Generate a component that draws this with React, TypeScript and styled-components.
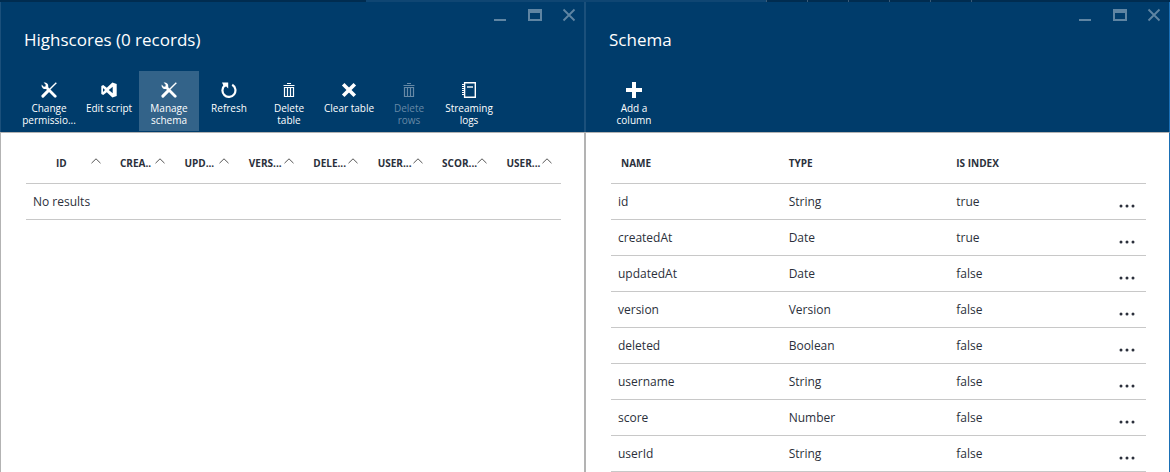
import React from "react";
import styled, { createGlobalStyle, css } from "styled-components";

const navy = "#003c6b";
const rule = "#c8c8c8";
const edge = "#b3b3b3";

const GlobalStyle = createGlobalStyle`
  *, *::before, *::after { box-sizing: border-box; }
  body {
    margin: 0;
    background: #fff;
    color: #2b303b;
    font-family: "Segoe UI", "Open Sans", "Noto Sans", sans-serif;
    font-size: 12px;
    line-height: 16px;
  }
  button { font: inherit; color: inherit; background: none; border: 0; padding: 0; cursor: pointer; }
`;

const Page = styled.div`
  min-height: 100vh;
  display: flex;
  flex-direction: column;
`;

const TopBar = styled.div`
  display: flex;
  height: 2px;
  background: #002c50;
`;

const TopSpacer = styled.div`
  width: 366px;
`;

const SearchEdge = styled.div`
  width: 400px;
  background: #0f4673;
`;

const TopSlot = styled.div`
  width: 41px;
  border-left: 1px solid #3a5b78;
`;

const Blades = styled.main`
  flex: 1;
  display: grid;
  grid-template-columns: 1fr 1fr;
`;

const Blade = styled.section`
  display: flex;
  flex-direction: column;
  min-width: 0;
`;

const BladeHeader = styled.header<{ $active?: boolean }>`
  display: flex;
  flex-direction: column;
  height: 130px;
  background: ${navy};
  border: solid #1b507b;
  border-width: 0 1px;
  ${(p) => p.$active && css`border-right-color: #1a6fb5;`}
`;

const WindowControls = styled.div`
  display: flex;
  justify-content: flex-end;
  align-items: center;
  gap: 20px;
  height: 26px;
  padding-right: 8px;
  color: #5f85a3;
`;

const ControlButton = styled.button`
  display: block;
  width: 14px;
  height: 14px;
  svg { display: block; }
`;

const Title = styled.h1`
  margin: 0;
  padding: 0 23px;
  font-size: 17px;
  line-height: 24px;
  font-weight: 400;
  color: #fff;
`;

const Toolbar = styled.div`
  display: flex;
  margin-top: auto;
  padding: 0 18px 1px;
`;

const Command = styled.button<{ $selected?: boolean }>`
  display: flex;
  flex-direction: column;
  align-items: center;
  gap: 4px;
  width: 60px;
  height: 60px;
  padding: 11px 0 0;
  color: #fff;
  font-size: 10px;
  font-weight: 500;
  line-height: 12px;
  text-align: center;
  background: ${(p) => (p.$selected ? "#336389" : "transparent")};
  &:disabled { color: #6689a6; cursor: default; }
  svg { display: block; flex: none; }
`;

const CommandLabel = styled.span`
  max-width: 60px;
  white-space: pre-line;
`;

const BladeBody = styled.div<{ $active?: boolean }>`
  flex: 1;
  padding: 0 23px 0 25px;
  border: solid ${edge};
  border-width: 1px 1px 0;
  ${(p) => p.$active && css`border-right-color: #1a6fb5;`}
`;

const Table = styled.table`
  width: 100%;
  table-layout: fixed;
  border-collapse: separate;
  border-spacing: 0;
`;

const HeadCell = styled.th<{ $first?: boolean }>`
  height: 51px;
  padding: 9px 0 0 ${(p) => (p.$first ? "30px" : "10px")};
  border-bottom: 1px solid ${rule};
  font-size: 10px;
  font-weight: 700;
  text-align: left;
  white-space: nowrap;
`;

const SchemaHead = styled(HeadCell)`
  padding-left: 10px;
`;

const Cell = styled.td<{ $inset?: number }>`
  height: 36px;
  padding: 1px 0 0 ${(p) => p.$inset ?? 10}px;
  border-bottom: 1px solid ${rule};
`;

const SortButton = styled.button`
  display: flex;
  font-weight: 700;
  svg { display: block; flex: none; margin-top: 3px; color: #555; }
`;

const SortLabel = styled.span`
  width: 35px;
  text-align: left;
`;

const FirstCol = styled.col`
  width: 84px;
`;

const MenuCol = styled.col`
  width: 32px;
`;

const MoreButton = styled.button`
  display: block;
  width: 20px;
  height: 16px;
  svg { display: block; margin: 8px auto 0; }
`;

const ToolsIcon = () => (
  <svg width="16" height="16" viewBox="0 0 16 16" fill="none" stroke="currentColor">
    <path d="M6 6 14.2 14.2" strokeWidth="2.8" strokeLinecap="round" />
    <path d="M2.6.6 4.8 2.8 4.4 4.4 2.8 4.8.6 2.6A3.8 3.8 0 0 0 1.8 6.2c1.2 1 2.6 1 3.6.6L7.2 5C7.4 3.600 7.200 2.400 6.200 1.500A3.800 3.800 0 0 0 2.600.6z" fill="currentColor" stroke="none" />
    <path d="M15.300.7 8 8" strokeWidth="1.4" />
    <path d="M6.600 9.400 1.900 14.100" strokeWidth="3" strokeLinecap="round" />
  </svg>
);

const ScriptIcon = () => (
  <svg width="16" height="16" viewBox="0 0 16 16" fill="currentColor" fillRule="evenodd">
    <path d="M11.4.5 15.7 2v12l-4.3 1.5-5.600-5.200-3.600 2.800L.3 12V4l1.900-1.100 3.600 2.800zM11.700 4.800 7.800 8l3.900 3.200zM2 5.900v4.200L4 8z" />
  </svg>
);

const RefreshIcon = () => (
  <svg width="16" height="16" viewBox="0 0 16 16" fill="none" stroke="currentColor">
    <path d="M11.200 2.800A6.500 6.500 0 1 1 3.800 3.400" strokeWidth="2.200" />
    <path d="M1 .4h6.200v6.200L5.200 4.600 3 5z" fill="currentColor" stroke="none" />
  </svg>
);

const TrashIcon = () => (
  <svg width="16" height="16" viewBox="0 0 16 16" fill="none" stroke="currentColor">
    <path d="M2.500 3.500h11M6 1.500h4" />
    <path d="M3.500 5v9.500h9V5M6.500 5v9M9.500 5v9M3.500 5.500h9" strokeWidth="1.200" />
  </svg>
);

const ClearIcon = () => (
  <svg width="16" height="16" viewBox="0 0 16 16" stroke="currentColor">
    <path d="m2.200 2.200 11.600 11.600M13.800 2.200 2.200 13.800" strokeWidth="3.600" />
  </svg>
);

const LogIcon = () => (
  <svg width="16" height="16" viewBox="0 0 16 16" fill="none" stroke="currentColor">
    <path d="M3.600.7h10.700v14.600H3.600z" strokeWidth="1.400" />
    <path d="M6 5h6" strokeWidth="1.400" />
    <path d="M1 2.500h3M1 4.500h3M1 6.500h3M1 8.500h3M1 10.500h3M1 12.500h3" />
  </svg>
);

const PlusIcon = () => (
  <svg width="16" height="16" viewBox="0 0 16 16" fill="currentColor">
    <path d="M6 0h4v6h6v4h-6v6H6v-6H0V6h6z" />
  </svg>
);

const CaretIcon = () => (
  <svg width="10" height="6" viewBox="0 0 10 6" fill="none" stroke="currentColor">
    <path d="M.5 5.2 5 .8l4.5 4.4" />
  </svg>
);

const Controls = () => (
  <WindowControls>
    <ControlButton aria-label="Minimize">
      <svg width="14" height="14" fill="currentColor"><path d="M0 11h12v2H0z" /></svg>
    </ControlButton>
    <ControlButton aria-label="Maximize">
      <svg width="14" height="14" fill="currentColor" fillRule="evenodd"><path d="M0 1h14v12H0zM2 5v6h10V5z" /></svg>
    </ControlButton>
    <ControlButton aria-label="Close">
      <svg width="14" height="14" fill="none" stroke="currentColor" strokeWidth="1.8"><path d="m1.5 1.5 11 11M12.5 1.5l-11 11" /></svg>
    </ControlButton>
  </WindowControls>
);

const commands = [
  { label: "Change\npermissio...", icon: ToolsIcon },
  { label: "Edit script", icon: ScriptIcon },
  { label: "Manage\nschema", icon: ToolsIcon, selected: true },
  { label: "Refresh", icon: RefreshIcon },
  { label: "Delete\ntable", icon: TrashIcon },
  { label: "Clear table", icon: ClearIcon },
  { label: "Delete\nrows", icon: TrashIcon, disabled: true },
  { label: "Streaming\nlogs", icon: LogIcon },
];

const recordColumns = ["ID", "CREA..", "UPD...", "VERS...", "DELE...", "USER...", "SCOR...", "USER..."];

const schema = [
  ["id", "String", "true"],
  ["createdAt", "Date", "true"],
  ["updatedAt", "Date", "false"],
  ["version", "Version", "false"],
  ["deleted", "Boolean", "false"],
  ["username", "String", "false"],
  ["score", "Number", "false"],
  ["userId", "String", "false"],
];

export default function App() {
  return (
    <Page>
      <GlobalStyle />
      <TopBar>
        <TopSpacer />
        <SearchEdge />
        {[0, 1, 2, 3, 4, 5].map((slot) => <TopSlot key={slot} />)}
      </TopBar>
      <Blades>
        <Blade>
          <BladeHeader>
            <Controls />
            <Title>Highscores (0 records)</Title>
            <Toolbar>
              {commands.map(({ label, icon: Icon, selected, disabled }) => (
                <Command key={label} $selected={selected} disabled={disabled}>
                  <Icon />
                  <CommandLabel>{label}</CommandLabel>
                </Command>
              ))}
            </Toolbar>
          </BladeHeader>
          <BladeBody>
            <Table>
              <colgroup>
                <FirstCol />
                {recordColumns.slice(1).map((_, i) => <col key={i} />)}
              </colgroup>
              <thead>
                <tr>
                  {recordColumns.map((name, i) => (
                    <HeadCell key={i} $first={i === 0}>
                      <SortButton>
                        <SortLabel>{name}</SortLabel>
                        <CaretIcon />
                      </SortButton>
                    </HeadCell>
                  ))}
                </tr>
              </thead>
              <tbody>
                <tr><Cell $inset={7} colSpan={8}>No results</Cell></tr>
              </tbody>
            </Table>
          </BladeBody>
        </Blade>
        <Blade>
          <BladeHeader $active>
            <Controls />
            <Title>Schema</Title>
            <Toolbar>
              <Command>
                <PlusIcon />
                <CommandLabel>{"Add a\ncolumn"}</CommandLabel>
              </Command>
            </Toolbar>
          </BladeHeader>
          <BladeBody $active>
            <Table>
              <colgroup><col /><col /><col /><MenuCol /></colgroup>
              <thead>
                <tr>
                  <SchemaHead>NAME</SchemaHead>
                  <SchemaHead>TYPE</SchemaHead>
                  <SchemaHead>IS INDEX</SchemaHead>
                  <SchemaHead aria-label="Actions" />
                </tr>
              </thead>
              <tbody>
                {schema.map(([name, type, indexed]) => (
                  <tr key={name}>
                    <Cell $inset={7}>{name}</Cell>
                    <Cell>{type}</Cell>
                    <Cell>{indexed}</Cell>
                    <Cell $inset={3}>
                      <MoreButton aria-label={`More actions for ${name}`}>
                        <svg width="16" height="4" fill="currentColor">
                          <circle cx="2" cy="2" r="1.5" /><circle cx="8" cy="2" r="1.5" /><circle cx="14" cy="2" r="1.5" />
                        </svg>
                      </MoreButton>
                    </Cell>
                  </tr>
                ))}
              </tbody>
            </Table>
          </BladeBody>
        </Blade>
      </Blades>
    </Page>
  );
}
